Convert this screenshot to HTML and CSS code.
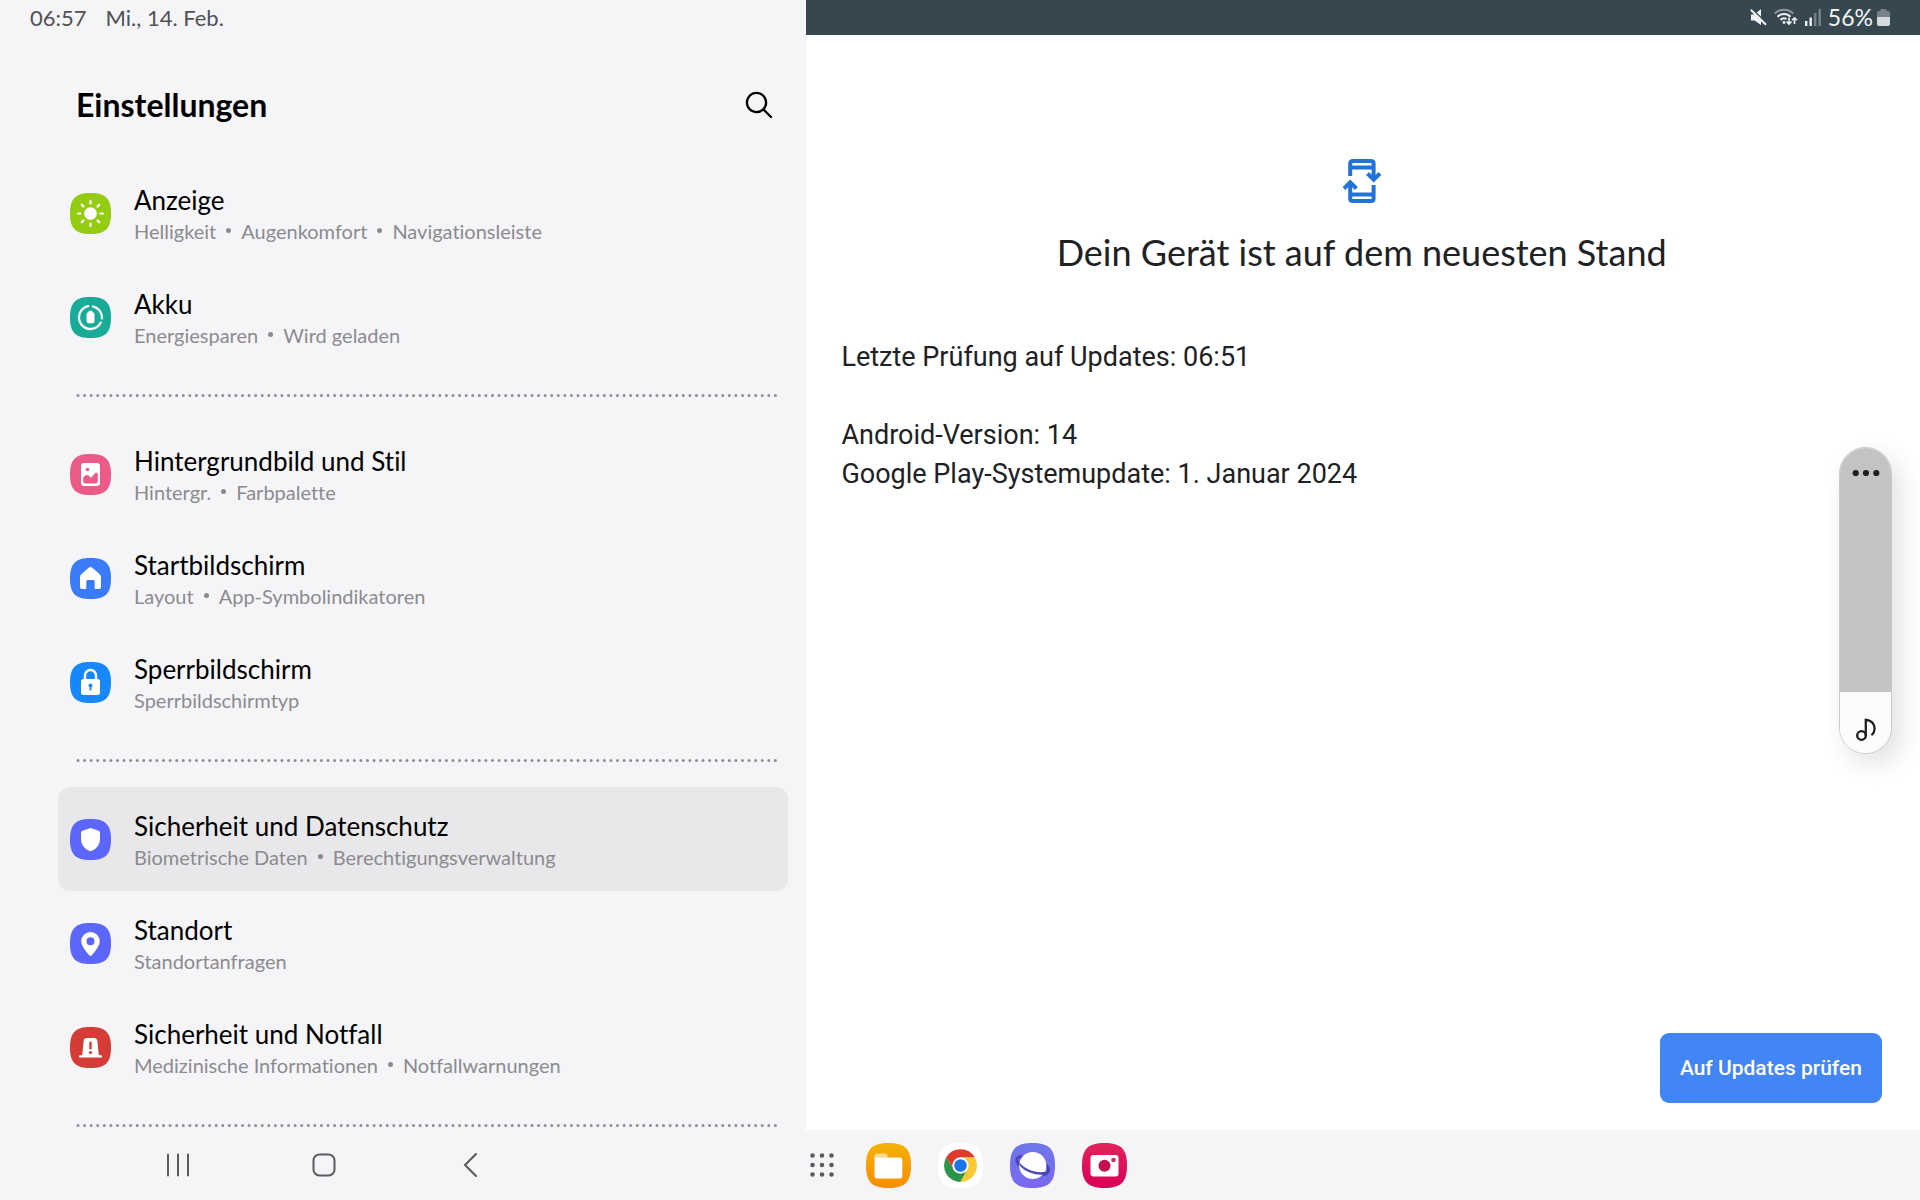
FILE: index.html
```html
<!DOCTYPE html>
<html lang="de">
<head>
<meta charset="utf-8">
<meta name="viewport" content="width=device-width, initial-scale=1">
<title>Einstellungen</title>
<link rel="stylesheet" href="styles.css">
</head>
<body>
<svg class="defs" aria-hidden="true">
  <symbol id="tile" viewBox="0 0 41 41"><path d="M20.500 0C35.500 0 41 5.500 41 20.500S35.500 41 20.500 41 0 35.500 0 20.500 5.500 0 20.500 0Z"/></symbol>
</svg>

<section class="settings">
  <div class="status status-left"><span class="clock">06:57</span><span>Mi., 14. Feb.</span></div>
  <header class="header">
    <h1>Einstellungen</h1>
    <button class="search" type="button" aria-label="Suchen">
      <svg width="28" height="28" viewBox="0 0 28 28" fill="none" stroke="#000" stroke-width="2.300" stroke-linecap="round"><circle cx="11.500" cy="11.500" r="9.600"/><path d="M18.500 18.500L26 26"/></svg>
    </button>
  </header>
  <nav class="list">
    <a class="row" href="#anzeige">
      <svg class="icon" viewBox="0 0 41 41"><use href="#tile" fill="#93cc12"/><circle cx="20.500" cy="20.500" r="6.300" fill="#fff"/><path d="M20.500 8v2.500M20.500 30.500V33M8 20.500h2.500M30.500 20.500H33M11.700 11.700l1.700 1.700M27.600 27.600l1.700 1.700M11.700 29.300l1.700-1.700M27.600 13.400l1.700-1.700" stroke="#fff" stroke-width="2.200" stroke-linecap="round"/></svg>
      <span class="text"><span class="title">Anzeige</span><span class="sub"><span>Helligkeit</span><span>Augenkomfort</span><span>Navigationsleiste</span></span></span>
    </a>
    <a class="row" href="#akku">
      <svg class="icon" viewBox="0 0 41 41"><use href="#tile" fill="#17ab98"/><g fill="none" stroke="#fff" stroke-width="2.300" stroke-linecap="round"><path d="M18.300 9.200A11.500 11.500 0 1 0 30.800 25.600"/><path d="M23 9.300A11.500 11.500 0 0 1 31.900 21.300"/></g><path d="M18.500 15.200v-.7q0-.7.7-.7h2.600q.7 0 .7.700v.7q2 .2 2 2v7q0 2-2 2h-4q-2 0-2-2v-7q0-1.800 2-2Z" fill="#fff"/></svg>
      <span class="text"><span class="title">Akku</span><span class="sub"><span>Energiesparen</span><span>Wird geladen</span></span></span>
    </a>
    <svg class="divider" aria-hidden="true"><line x1="0" y1="50%" x2="100%" y2="50%" pathLength="106"/></svg>
    <a class="row" href="#hintergrund">
      <svg class="icon" viewBox="0 0 41 41"><use href="#tile" fill="#ea5b87"/><rect x="11" y="9" width="19" height="23" rx="3" fill="#fff"/><circle cx="17.500" cy="15.500" r="1.800" fill="#ea5b87"/><path d="M13.200 27v-3.500q3.800-4.500 6.800-.5l1 .8 4.500-5q1-.8 2.300 1.200v7q0 2.500-2.300 2.500h-10q-2.300 0-2.300-2.500Z" fill="#ea5b87"/></svg>
      <span class="text"><span class="title">Hintergrundbild und Stil</span><span class="sub"><span>Hintergr.</span><span>Farbpalette</span></span></span>
    </a>
    <a class="row" href="#start">
      <svg class="icon" viewBox="0 0 41 41"><use href="#tile" fill="#3a7bfa"/><path d="M19 9.500q1.500-1.200 3 0l7.500 6.400q1.500 1.300 1.500 3V29q0 2-2 2h-4.300v-7.500q0-1.500-1.500-1.500h-5.400q-1.500 0-1.500 1.500V31H12q-2 0-2-2V18.900q0-1.700 1.500-3Z" fill="#fff"/></svg>
      <span class="text"><span class="title">Startbildschirm</span><span class="sub"><span>Layout</span><span>App-Symbolindikatoren</span></span></span>
    </a>
    <a class="row" href="#sperr">
      <svg class="icon" viewBox="0 0 41 41"><use href="#tile" fill="#1688fb"/><path d="M15 18v-4.500a5.500 5.500 0 0 1 11 0V18" fill="none" stroke="#fff" stroke-width="2.400"/><rect x="11" y="17" width="19" height="16" rx="2.500" fill="#fff"/><circle cx="20.500" cy="23.500" r="2" fill="#1688fb"/><path d="M20.500 24v4.500" stroke="#1688fb" stroke-width="1.800"/></svg>
      <span class="text"><span class="title">Sperrbildschirm</span><span class="sub"><span>Sperrbildschirmtyp</span></span></span>
    </a>
    <svg class="divider" aria-hidden="true"><line x1="0" y1="50%" x2="100%" y2="50%" pathLength="106"/></svg>
    <a class="row selected" href="#sicherheit" aria-current="page">
      <svg class="icon" viewBox="0 0 41 41"><use href="#tile" fill="#5d66fb"/><path d="M20.500 9l8 2.800q1.500.5 1.500 2V20q0 8-8 11.700-1.500.7-3 0Q11 28 11 20v-6.200q0-1.500 1.500-2Z" fill="#fff"/></svg>
      <span class="text"><span class="title">Sicherheit und Datenschutz</span><span class="sub"><span>Biometrische Daten</span><span>Berechtigungsverwaltung</span></span></span>
    </a>
    <a class="row" href="#standort">
      <svg class="icon" viewBox="0 0 41 41"><use href="#tile" fill="#5d66fb"/><path fill-rule="evenodd" d="M20.500 9a9.300 9.300 0 0 1 9.300 9.300q0 5.200-8 14-1.300 1.200-2.600 0-8-8.800-8-14A9.300 9.300 0 0 1 20.500 9Zm0 5.300a4 4 0 1 0 0 8 4 4 0 0 0 0-8Z" fill="#fff"/></svg>
      <span class="text"><span class="title">Standort</span><span class="sub"><span>Standortanfragen</span></span></span>
    </a>
    <a class="row" href="#notfall">
      <svg class="icon" viewBox="0 0 41 41"><use href="#tile" fill="#d53c37"/><path d="M16.500 11h8q2.500 0 2.800 2.500l1.500 14.700h2.200q1 0 1 1v1.300H9v-1.300q0-1 1-1h2.200l1.500-14.700q.3-2.500 2.800-2.500Z" fill="#fff"/><path d="M20.500 15.800v5.500" stroke="#d53c37" stroke-width="2.400" stroke-linecap="round"/><circle cx="20.500" cy="25.500" r="1.600" fill="#d53c37"/></svg>
      <span class="text"><span class="title">Sicherheit und Notfall</span><span class="sub"><span>Medizinische Informationen</span><span>Notfallwarnungen</span></span></span>
    </a>
    <svg class="divider" aria-hidden="true"><line x1="0" y1="50%" x2="100%" y2="50%" pathLength="106"/></svg>
  </nav>
</section>

<main class="update">
  <div class="status status-right">
    <svg width="17" height="17" viewBox="0 0 17 17"><path d="M1 5.500h3.500L11 0v16L4.500 11.500H1Z" fill="#eef2f4"/><path d="M1.500-.5l16 15.500" stroke="#37474f" stroke-width="1.600"/><path d="M.8.800L16 15.800" stroke="#eef2f4" stroke-width="2"/></svg>
    <svg width="24" height="18" viewBox="0 0 24 18" fill="none" stroke="#eef2f4" stroke-width="2"><path d="M.8 5.500a13 13 0 0 1 18.400 0" stroke="#8d979c"/><path d="M3.500 8.800a9 9 0 0 1 13 0M6.500 12a5 5 0 0 1 6-1"/><circle cx="10" cy="14.500" r="1.400" fill="#eef2f4" stroke="none"/><path d="M15 9.500V16M12.500 13.500L15 16l2.500-2.500M20.500 16V9.800M18 12.300l2.500-2.500 2.500 2.500" stroke-width="1.600"/></svg>
    <svg width="16" height="17" viewBox="0 0 16 17"><path d="M0 12h2.400v5H0ZM4.500 8.500h2.400V17H4.500Z" fill="#eef2f4"/><path d="M9 4h2.400v13H9ZM13.500 0h2.400v17h-2.400Z" fill="#76838a"/></svg>
    <span class="charge"><span>56%</span>
    <svg width="13" height="17" viewBox="0 0 13 17"><path d="M3.500 2V0h6v2H11q2 0 2 2v4H0V4q0-2 2-2Z" fill="#76838a"/><path d="M0 8h13v7q0 2-2 2H2q-2 0-2-2Z" fill="#d3dade"/></svg></span>
  </div>
  <div class="content">
    <svg class="sync" width="38" height="44" viewBox="0 0 38 44" fill="none" stroke="#2272db" stroke-width="4"><path d="M7.200 17V4.500q0-2.500 2.700-2.500h18q2.700 0 2.700 2.500V21M7.200 8.500h23.400M30.600 26v13.500q0 2.500-2.700 2.500h-18q-2.700 0-2.700-2.500V23M7.200 35.500h23.400"/><path d="M24.500 14.500l6.200 6.200 6.200-6.200M1 29.500l6.200-6.200 6.200 6.200"/></svg>
    <h2>Dein Gerät ist auf dem neuesten Stand</h2>
    <p>Letzte Prüfung auf Updates: 06:51</p>
    <p>Android-Version: 14<br>Google Play-Systemupdate: 1. Januar 2024</p>
    <button class="check" type="button">Auf Updates prüfen</button>
  </div>
</main>

<footer class="taskbar">
  <div class="keys">
    <button type="button" aria-label="Letzte Apps"><svg width="24" height="24" viewBox="0 0 24 24" stroke="#5b5b5e" stroke-width="2" stroke-linecap="round"><path d="M2 1.500v21M12 1.500v21M22 1.500v21"/></svg></button>
    <button type="button" aria-label="Startseite"><svg width="24" height="24" viewBox="0 0 24 24" fill="none" stroke="#5b5b5e" stroke-width="2"><rect x="1.500" y="1.500" width="21" height="21" rx="6"/></svg></button>
    <button type="button" aria-label="Zurück"><svg width="24" height="24" viewBox="0 0 24 24" fill="none" stroke="#5b5b5e" stroke-width="2" stroke-linecap="round" stroke-linejoin="round"><path d="M18 1L7 12l11 11"/></svg></button>
  </div>
  <div class="apps">
    <button type="button" aria-label="Alle Apps"><svg width="28" height="28" viewBox="0 0 28 28"><path d="M4.500 4.500h0M14 4.500h0M23.500 4.500h0M4.500 14h0M14 14h0M23.500 14h0M4.500 23.500h0M14 23.500h0M23.500 23.500h0" stroke="#5b5b5e" stroke-width="4.600" stroke-linecap="round"/></svg></button>
    <div class="dock">
      <button type="button" aria-label="Eigene Dateien"><svg width="45" height="45" viewBox="0 0 45 45"><linearGradient id="fo" x2="0" y2="1"><stop stop-color="#f5b107"/><stop offset="1" stop-color="#f68d02"/></linearGradient><path d="M22.500 0C39 0 45 6 45 22.500S39 45 22.500 45 0 39 0 22.500 6 0 22.500 0Z" fill="url(#fo)"/><path d="M8.500 16v-3q0-2.500 2.500-2.500h8q2 0 2.500 2v4Z" fill="#fbd990"/><path d="M8.500 14.500h25.300q2.500 0 2.500 2.500v16q0 2.500-2.500 2.500H11q-2.500 0-2.500-2.500Z" fill="#fff"/></svg></button>
      <button type="button" aria-label="Chrome"><svg width="45" height="45" viewBox="0 0 45 45"><path d="M22.500 0C39 0 45 6 45 22.500S39 45 22.500 45 0 39 0 22.500 6 0 22.500 0Z" fill="#fff"/><path d="M22.500 14.500H36.900A16.600 16.600 0 0 0 8.100 14.500L15.600 26.500A8 8 0 0 1 22.500 14.500Z" fill="#df3a2e"/><path d="M15.600 26.500L8.100 14.500A16.600 16.600 0 0 0 22.500 39.100L29.400 26.500A8 8 0 0 1 15.600 26.500Z" fill="#2a9548"/><path d="M29.400 26.500L22.500 39.100A16.600 16.600 0 0 0 36.900 14.500H22.500A8 8 0 0 1 29.400 26.500Z" fill="#fcc832"/><circle cx="22.500" cy="22.500" r="7.900" fill="#fff"/><circle cx="22.500" cy="22.500" r="6.300" fill="#1d73e8"/></svg></button>
      <button type="button" aria-label="Internet"><svg width="45" height="45" viewBox="0 0 45 45"><linearGradient id="in" x2="0" y2="1"><stop stop-color="#6f77ea"/><stop offset="1" stop-color="#7a67ef"/></linearGradient><path d="M22.500 0C39 0 45 6 45 22.500S39 45 22.500 45 0 39 0 22.500 6 0 22.500 0Z" fill="url(#in)"/><path d="M12 13.500C5 13.500 4.500 20 15 26.500s22.500 6.500 23.500 1.500c.4-2-1-5-4-8" fill="none" stroke="#4a44b8" stroke-width="3"/><circle cx="22.800" cy="22.500" r="13.600" fill="#fff"/><path d="M9.300 19.500Q14 25 21 27.600t14.800 1.200l-1.500 2.700Q27.500 32.500 20 29.500T9.500 22Z" fill="#4a44b8"/></svg></button>
      <button type="button" aria-label="Kamera"><svg width="45" height="45" viewBox="0 0 45 45"><linearGradient id="ca" x2="0" y2="1"><stop stop-color="#e2245b"/><stop offset="1" stop-color="#d80058"/></linearGradient><path d="M22.500 0C39 0 45 6 45 22.500S39 45 22.500 45 0 39 0 22.500 6 0 22.500 0Z" fill="url(#ca)"/><rect x="8.500" y="12" width="28" height="21.500" rx="3" fill="#fff"/><circle cx="22.500" cy="22.700" r="6" fill="#c40f50"/><circle cx="31.500" cy="17" r="2.300" fill="#c9305f"/></svg></button>
    </div>
  </div>
</footer>

<aside class="volume">
  <button class="more" type="button" aria-label="Weitere Optionen"><svg width="28" height="8" viewBox="0 0 28 8" fill="#1f1f1f"><circle cx="3.700" cy="4" r="3.100"/><circle cx="14" cy="4" r="3.100"/><circle cx="24.300" cy="4" r="3.100"/></svg></button>
  <input class="level" type="range" min="0" max="100" value="20" aria-label="Medienlautstärke">
  <svg class="note" width="20" height="24" viewBox="0 0 20 24" fill="none" stroke="#1c1c1c" stroke-width="2.300" stroke-linecap="round"><circle cx="5.500" cy="17.500" r="4.300"/><path d="M9.800 17.500V1.800C15.500 2 19 6 18.500 11.500q-.3 3-2.300 5"/></svg>
</aside>
</body>
</html>
```
FILE: styles.css
```css
* { box-sizing: border-box; }

body {
  margin: 0;
  height: 100vh;
  display: grid;
  grid-template-columns: 42% 58%;
  grid-template-rows: minmax(0, 1fr) auto;
  background: #f5f5f8;
  color: #000;
  font-family: Lato, "Liberation Sans", sans-serif;
  font-variant-ligatures: none;
}

button {
  padding: 0;
  border: 0;
  background: none;
  font: inherit;
  display: flex;
  align-items: center;
  justify-content: center;
}

svg { display: block; flex: none; }
.defs { position: absolute; width: 0; height: 0; }

.status {
  height: 35px;
  padding-bottom: 1px;
  display: flex;
  align-items: center;
}

/* Settings list */
.settings {
  min-width: 0;
  overflow: hidden;
}

.status-left {
  padding-left: 30px;
  gap: 19px;
  font-size: 22px;
  color: #515154;
}

.header {
  height: 126px;
  padding: 13px 33px 0 76px;
  display: flex;
  align-items: center;
  justify-content: space-between;
}
.header h1 {
  margin: 0;
  font-size: 32px;
  line-height: 40px;
  font-weight: 700;
}

.list {
  padding: 0 18px 0 58px;
  display: flex;
  flex-direction: column;
}
.row {
  height: 104px;
  padding: 0 12px;
  display: flex;
  align-items: center;
  gap: 23px;
  border-radius: 12px;
  color: inherit;
  text-decoration: none;
}
.selected { background: #e8e8ea; }
.icon { width: 41px; height: 41px; }
.text {
  padding-top: 1px;
  display: flex;
  flex-direction: column;
}
.title { font-size: 26px; line-height: 34px; }
.sub {
  font-size: 20px;
  line-height: 28px;
  color: #8b8b8f;
  display: flex;
}
.sub span + span {
  display: flex;
  align-items: center;
}
.sub span + span::before {
  content: "";
  width: 5px;
  height: 5px;
  margin: 0 10px;
  border-radius: 50%;
  background: currentColor;
}

.divider {
  height: 53px;
  width: calc(100% - 34px);
  margin-left: 20px;
  overflow: visible;
}
.divider line {
  stroke: #8e8e92;
  stroke-width: 3;
  stroke-linecap: round;
  stroke-dasharray: 0 1;
}
.divider { width: calc(100% - 33px); }

/* Update pane */
.update {
  min-width: 0;
  display: flex;
  flex-direction: column;
  background: #fff;
  color: #202124;
}
.status-right {
  padding-right: 30px;
  justify-content: flex-end;
  gap: 7px;
  background: #37474f;
  color: #f1f5f6;
  font-size: 23px;
}
.charge { display: flex; align-items: center; gap: 4px; }

.content {
  flex: 1;
  padding: 124px 38px 27px 35px;
  display: flex;
  flex-direction: column;
  font-family: Roboto, "Liberation Sans", sans-serif;
}
.sync { align-self: center; }
.content h2 {
  margin: 25px 0 62px;
  font-family: Lato, "Liberation Sans", sans-serif;
  font-size: 36px;
  line-height: 48px;
  font-weight: 400;
  text-align: center;
}
.content p {
  margin: 0 0 39px;
  font-size: 27px;
  line-height: 39px;
}
.check {
  margin-top: auto;
  align-self: flex-end;
  height: 70px;
  padding: 0 20px;
  border-radius: 9px;
  background: #4285f4;
  color: #fff;
  font-size: 21px;
  font-weight: 500;
}

/* Taskbar */
.taskbar {
  grid-column: 1 / -1;
  height: 70px;
  display: grid;
  grid-template-columns: 42% 58%;
  align-items: center;
}
.keys {
  padding-left: 154px;
  display: flex;
  gap: 98px;
}
.keys button { width: 48px; height: 48px; }
.apps {
  padding-left: 2px;
  display: flex;
  align-items: center;
  gap: 30px;
}
.dock { display: flex; gap: 27px; }

/* Volume overlay */
.volume {
  position: absolute;
  right: 28px;
  top: 447px;
  width: 53px;
  height: 307px;
  border: 1px solid #c9c9c9;
  border-radius: 27px;
  overflow: hidden;
  background: #fcfcfc;
  box-shadow: 8px 10px 26px rgba(0, 0, 0, 0.12);
}
.level {
  appearance: none;
  display: block;
  margin: 0;
  width: 100%;
  height: 100%;
  writing-mode: vertical-lr;
  direction: rtl;
  background: linear-gradient(to top, #fcfcfc 20%, #c3c3c3 20%);
}
.level::-webkit-slider-thumb { appearance: none; width: 1px; height: 1px; opacity: 0; }
.more {
  position: absolute;
  top: 11px;
  left: 0;
  width: 100%;
  height: 28px;
}
.note {
  position: absolute;
  bottom: 11px;
  left: 16px;
  pointer-events: none;
}
```
